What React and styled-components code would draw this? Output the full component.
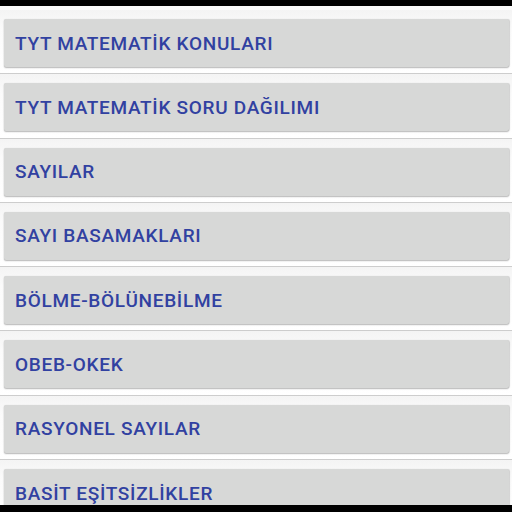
import React from "react";
import styled, { createGlobalStyle } from "styled-components";

const Global = createGlobalStyle`
  html, body { margin: 0; padding: 0; background: #000; }
  body { width: 512px; height: 512px; overflow: hidden; }
`;

const Frame = styled.div`
  width: 512px;
  height: 512px;
  display: flex;
  flex-direction: column;
  background: #000;
  padding: 6px 0 7px;
  box-sizing: border-box;
`;

const List = styled.div`
  flex: 1;
  overflow: hidden;
  background: #fafafa;
  padding-top: 4px;
  display: flex;
  flex-direction: column;
`;

const Row = styled.div`
  flex: none;
  height: 64.3px;
  box-sizing: border-box;
  padding: 9px 3px 0 4px;
  border-bottom: 1.5px solid #cdcdcd;
  background: linear-gradient(#f4f4f4, #fbfbfb 30%, #ffffff);
`;

const Button = styled.div`
  height: 48px;
  box-sizing: border-box;
  background: #d7d8d7;
  border-radius: 2px;
  box-shadow: 0 1px 1.5px rgba(0, 0, 0, 0.28), 0.5px 0 1px rgba(0, 0, 0, 0.12);
  display: flex;
  align-items: center;
  padding-left: 11px;
  font-family: Roboto, "Noto Sans", sans-serif;
  font-weight: 500;
  font-size: 19px;
  letter-spacing: 0.7px;
  color: #3141a1;
  white-space: nowrap;
`;

const items = [
  "TYT MATEMATİK KONULARI",
  "TYT MATEMATİK SORU DAĞILIMI",
  "SAYILAR",
  "SAYI BASAMAKLARI",
  "BÖLME-BÖLÜNEBİLME",
  "OBEB-OKEK",
  "RASYONEL SAYILAR",
  "BASİT EŞİTSİZLİKLER",
];

export default function App() {
  return (
    <>
      <Global />
      <Frame>
        <List>
          {items.map((t) => (
            <Row key={t}>
              <Button>{t}</Button>
            </Row>
          ))}
        </List>
      </Frame>
    </>
  );
}
